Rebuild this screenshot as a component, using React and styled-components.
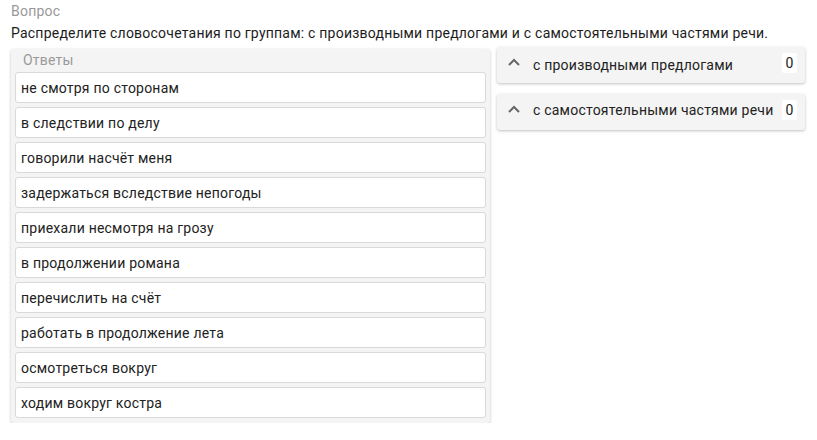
import React from 'react'
import styled, { createGlobalStyle } from 'styled-components'

const ANSWERS = [
  'не смотря по сторонам',
  'в следствии по делу',
  'говорили насчёт меня',
  'задержаться вследствие непогоды',
  'приехали несмотря на грозу',
  'в продолжении романа',
  'перечислить на счёт',
  'работать в продолжение лета',
  'осмотреться вокруг',
  'ходим вокруг костра'
]

const GROUPS = [
  { title: 'с производными предлогами', count: 0 },
  { title: 'с самостоятельными частями речи', count: 0 }
]

const GlobalStyle = createGlobalStyle`
  body {
    margin: 0;
    background: #fff;
    font-family: Roboto, 'Liberation Sans', sans-serif;
    letter-spacing: 0.22px;
    color: #222;
  }
`

const Page = styled.div`
  padding: 2px 11px 0 11px;
`

const Label = styled.div`
  font-size: 14px;
  line-height: 19px;
  color: #999;
`

const Question = styled.div`
  font-size: 14px;
  line-height: 19px;
  margin-top: 3px;
  color: #1c1c1c;
`

const Board = styled.div`
  display: flex;
  align-items: flex-start;
  gap: 7px;
  margin-top: 6px;
`

const AnswersPanel = styled.div`
  width: 479px;
  box-sizing: border-box;
  background: #f4f4f4;
  border-radius: 3px;
  box-shadow: 0 1px 3px rgba(0, 0, 0, 0.25);
  padding: 0 4px 5px 4px;
`

const PanelTitle = styled.div`
  font-size: 14px;
  line-height: 23px;
  padding-left: 8px;
  color: #9a9a9a;
`

const List = styled.div`
  display: flex;
  flex-direction: column;
  gap: 4px;
`

const Item = styled.div`
  height: 31px;
  box-sizing: border-box;
  background: #fff;
  border: 1px solid #d9d9d9;
  border-radius: 3px;
  padding: 0 5px;
  display: flex;
  align-items: center;
  font-size: 14px;
  color: #222;
`

const Groups = styled.div`
  width: 308px;
  display: flex;
  flex-direction: column;
  gap: 11px;
  margin-top: -2px;
`

const GroupCard = styled.div`
  height: 36px;
  box-sizing: border-box;
  background: #f4f4f4;
  border-radius: 3px;
  box-shadow: 0 1px 3px rgba(0, 0, 0, 0.25);
  display: flex;
  align-items: center;
  padding: 0 8px 0 10px;
`

const Chevron = styled.svg`
  width: 14px;
  height: 14px;
  flex: none;
  margin-top: -6px;
`

const GroupTitle = styled.div`
  flex: 1;
  font-size: 14px;
  color: #222;
  margin-left: 12px;
  margin-top: ${p => (p.$raised ? '-4px' : '0')};
`

const Count = styled.div`
  flex: none;
  min-width: 15px;
  height: 20px;
  background: #fff;
  border-radius: 2px;
  font-size: 14px;
  display: flex;
  align-items: center;
  justify-content: center;
  color: #222;
  margin-top: -5px;
`

const App = () => {
  return (
    <Page>
      <GlobalStyle />
      <Label>Вопрос</Label>
      <Question>
        Распределите словосочетания по группам: с производными предлогами и с самостоятельными частями речи.
      </Question>
      <Board>
        <AnswersPanel>
          <PanelTitle>Ответы</PanelTitle>
          <List>
            {ANSWERS.map((a, i) => (
              <Item key={i}>{a}</Item>
            ))}
          </List>
        </AnswersPanel>
        <Groups>
          {GROUPS.map((g, i) => (
            <GroupCard key={i}>
              <Chevron viewBox='0 0 14 14'>
                <path d='M2 10 L7 5 L12 10' fill='none' stroke='#666' strokeWidth='2' />
              </Chevron>
              <GroupTitle $raised={i === 1}>{g.title}</GroupTitle>
              <Count>{g.count}</Count>
            </GroupCard>
          ))}
        </Groups>
      </Board>
    </Page>
  )
}

export default App
